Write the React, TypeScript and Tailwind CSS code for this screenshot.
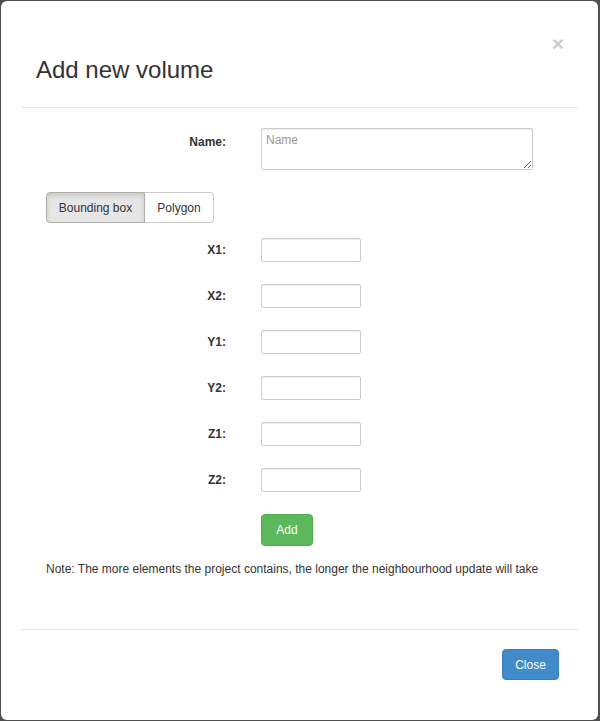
import React from "react";

const coords = ["X1", "X2", "Y1", "Y2", "Z1", "Z2"];

export default function App() {
  return (
    <div className="w-[600px] h-[721px] bg-[#4f4f4f] pl-[1px] pt-[1px] pr-[2px] pb-[1px] font-['Liberation_Sans',Arial,sans-serif] text-[12px] text-[#333]">
      <div className="h-full bg-white rounded-[6px] flex flex-col px-[20px]">
        {/* header */}
        <div className="relative h-[107px] border-b border-[#e5e5e5] flex items-end pb-[24px] pl-[15px]">
          <h4 className="text-[24px] leading-[26px] font-normal text-[#333]">Add new volume</h4>
          <button className="absolute top-[32px] right-[14px] text-[21px] leading-none font-bold text-black opacity-20">
            ×
          </button>
        </div>

        {/* body */}
        <div className="flex-1 pt-[20px]">
          <div className="flex">
            <label className="w-[205px] text-right font-bold pt-[6px] leading-[17px]">Name:</label>
            <textarea
              placeholder="Name"
              className="ml-[35px] w-[272px] h-[42px] border border-[#ccc] rounded-[2px] px-[4px] py-[3px] leading-[17px] placeholder:text-[#999] shadow-[inset_0_1px_1px_rgba(0,0,0,0.075)]"
            />
          </div>

          <div className="mt-[22px] ml-[25px] flex h-[31px]">
            <button className="whitespace-nowrap bg-[#e6e6e6] border border-[#adadad] rounded-l-[4px] shadow-[inset_0_3px_5px_rgba(0,0,0,0.125)] w-[99px]">
              Bounding box
            </button>
            <button className="whitespace-nowrap bg-white border border-[#ccc] border-l-0 rounded-r-[4px] w-[69px]">
              Polygon
            </button>
          </div>

          <div className="mt-[15px] flex flex-col gap-[22px]">
            {coords.map((c) => (
              <div key={c} className="flex items-center">
                <label className="w-[205px] text-right font-bold leading-[17px] pt-[1px]">{c}:</label>
                <input className="ml-[35px] w-[100px] h-[24px] border border-[#ccc] rounded-[2px] px-[6px] shadow-[inset_0_1px_1px_rgba(0,0,0,0.075)]" />
              </div>
            ))}
          </div>

          <div className="mt-[22px] pl-[240px]">
            <button className="w-[52px] h-[32px] bg-[#5cb85c] border border-[#4cae4c] rounded-[4px] text-white">
              Add
            </button>
          </div>

          <p className="mt-[15px] pl-[25px] leading-[17px]">
            Note: The more elements the project contains, the longer the neighbourhood update will take
          </p>
        </div>

        {/* footer */}
        <div className="border-t border-[#e5e5e5] pt-[19px] pb-[40px] pr-[19px] flex justify-end">
          <button className="w-[57px] h-[31px] bg-[#428bca] border border-[#357ebd] rounded-[4px] text-white">
            Close
          </button>
        </div>
      </div>
    </div>
  );
}
